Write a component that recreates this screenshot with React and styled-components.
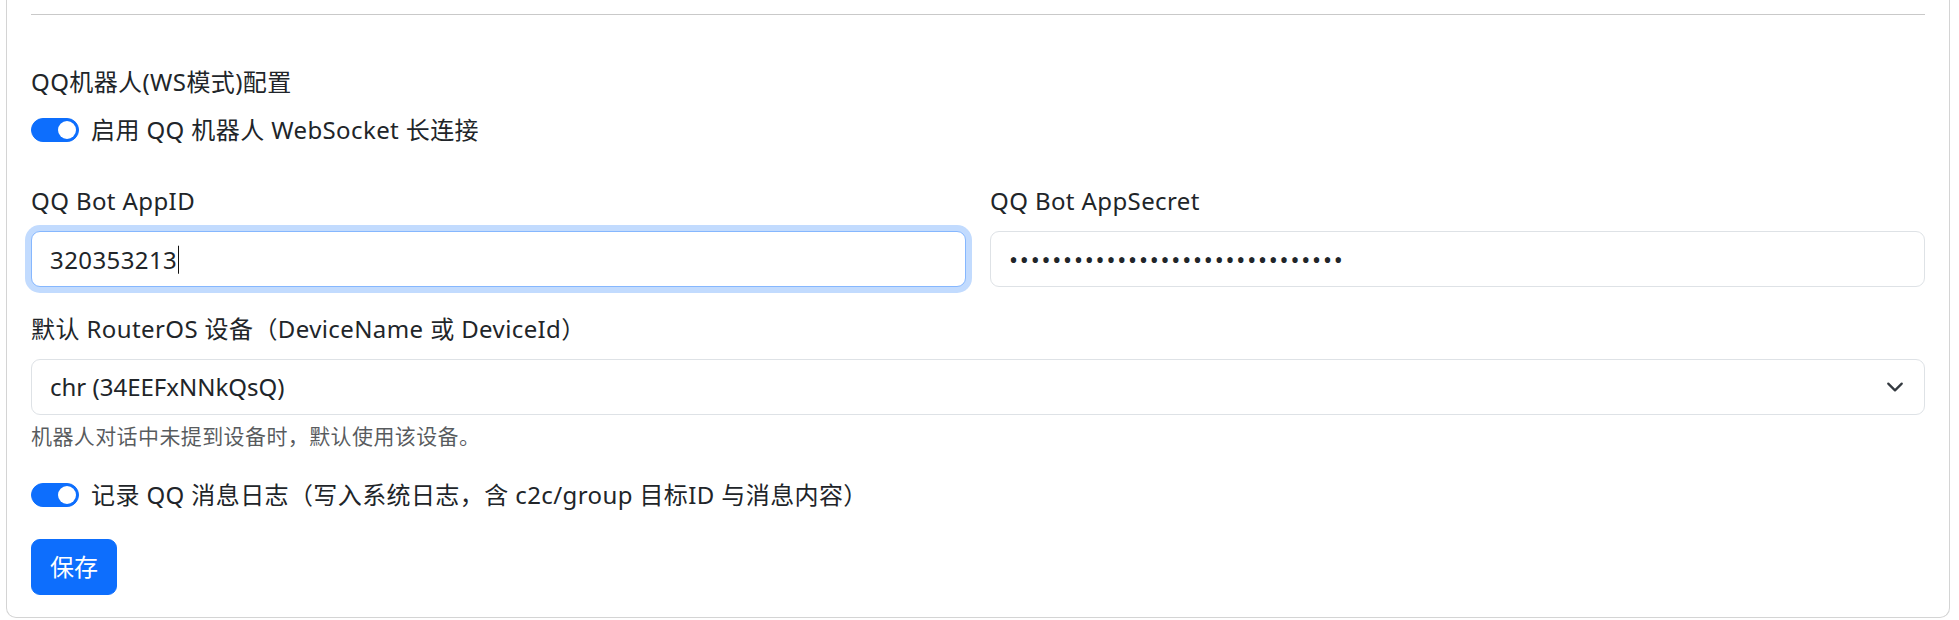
import React from 'react';
import styled, { createGlobalStyle } from 'styled-components';

const GlobalStyle = createGlobalStyle`
  html, body {
    margin: 0;
    padding: 0;
    background: #fff;
  }
  body {
    font-family: "Noto Sans", "Noto Sans CJK SC", sans-serif;
    font-size: 24px;
    line-height: 1.5;
    letter-spacing: 0.4px;
    color: #212529;
  }
  * { box-sizing: border-box; }
`;

const Page = styled.div`
  padding: 0 9px 1px 6px;
`;

const Card = styled.div`
  background: #fff;
  border: 1px solid #d4d4d4;
  border-top: none;
  border-radius: 0 0 10px 10px;
  padding: 14px 24px 22px;
`;

const Divider = styled.hr`
  margin: 0 0 49px;
  border: 0;
  border-top: 1px solid #c9c9c9;
`;

const SectionTitle = styled.div`
  margin-bottom: 12px;
`;

const Check = styled.label`
  display: flex;
  align-items: flex-start;
  gap: 12px;
  min-height: 36px;
  margin-bottom: ${({ $mb }) => $mb || 0}px;
  cursor: pointer;
`;

const SwitchTrack = styled.span`
  position: relative;
  flex: none;
  width: 48px;
  height: 24px;
  margin-top: 6px;
  border-radius: 24px;
  background: ${({ $on }) => ($on ? '#0d6efd' : '#fff')};
  border: 1px solid ${({ $on }) => ($on ? '#0d6efd' : '#c8cdd3')};

  &::after {
    content: '';
    position: absolute;
    top: 2px;
    left: ${({ $on }) => ($on ? '26px' : '2px')};
    width: 18px;
    height: 18px;
    border-radius: 50%;
    background: ${({ $on }) => ($on ? '#fff' : '#c8cdd3')};
  }
`;

const Row = styled.div`
  display: grid;
  grid-template-columns: 1fr 1fr;
  column-gap: 24px;
  margin-bottom: 24px;
`;

const Field = styled.div`
  margin-bottom: ${({ $mb }) => $mb || 0}px;
`;

const Label = styled.label`
  display: block;
  margin-bottom: 12px;
`;

const InputWrap = styled.div`
  position: relative;
`;

const TextInput = styled.input`
  display: block;
  width: 100%;
  height: 56px;
  padding: 9px 18px;
  font: inherit;
  letter-spacing: ${({ type }) => (type === 'password' ? '1.8px' : 'inherit')};
  color: #212529;
  background: #fff;
  border: 1px solid ${({ $focused }) => ($focused ? '#86b7fe' : '#dee2e6')};
  border-radius: 9px;
  outline: none;
  caret-color: transparent;
  box-shadow: ${({ $focused }) => ($focused ? '0 0 0 6px rgba(13, 110, 253, 0.25)' : 'none')};
`;

/* text caret drawn over the focused input, right after its value */
const Caret = styled.span`
  position: absolute;
  left: 19px;
  top: 50%;
  transform: translateY(-50%);
  color: transparent;
  pointer-events: none;
  line-height: 1;

  &::after {
    content: '';
    display: inline-block;
    width: 1px;
    height: 28px;
    margin-left: 1px;
    vertical-align: middle;
    background: #111;
  }
`;

const SelectWrap = styled.div`
  position: relative;
`;

const Select = styled.select`
  display: block;
  width: 100%;
  height: 56px;
  padding: 9px 54px 9px 18px;
  font: inherit;
  color: #212529;
  background: #fff;
  border: 1px solid #dee2e6;
  border-radius: 9px;
  appearance: none;
  outline: none;
`;

const Chevron = styled.svg`
  position: absolute;
  right: 18px;
  top: 50%;
  width: 24px;
  height: 18px;
  margin-top: -9px;
  pointer-events: none;
`;

const HelpText = styled.div`
  margin-top: 6px;
  font-size: 21px;
  color: rgba(33, 37, 41, 0.75);
`;

const PrimaryButton = styled.button`
  display: inline-block;
  height: 56px;
  padding: 9px 18px;
  font: inherit;
  color: #fff;
  background: #0d6efd;
  border: 1px solid #0d6efd;
  border-radius: 9px;
  cursor: pointer;
`;

const Switch = ({ on, children, mb }) => (
  <Check $mb={mb}>
    <SwitchTrack $on={on} />
    <span>{children}</span>
  </Check>
);

const appId = '320353213';

export default function App() {
  return (
    <Page>
      <GlobalStyle />
      <Card>
        <Divider />
        <SectionTitle>QQ机器人(WS模式)配置</SectionTitle>
        <Switch on mb={35}>启用 QQ 机器人 WebSocket 长连接</Switch>

        <Row>
          <div>
            <Label>QQ Bot AppID</Label>
            <InputWrap>
              <TextInput $focused defaultValue={appId} />
              <Caret aria-hidden="true">{appId}</Caret>
            </InputWrap>
          </div>
          <div>
            <Label>QQ Bot AppSecret</Label>
            <TextInput type="password" defaultValue="abcdefghijklmnopqrstuvwxyz01234" />
          </div>
        </Row>

        <Field $mb={24}>
          <Label>默认 RouterOS 设备（DeviceName 或 DeviceId）</Label>
          <SelectWrap>
            <Select defaultValue="chr">
              <option value="chr">chr (34EEFxNNkQsQ)</option>
            </Select>
            <Chevron viewBox="0 0 16 16" fill="none">
              <path d="m2 5 6 6 6-6" stroke="#343a40" strokeWidth="2" strokeLinecap="round" strokeLinejoin="round" />
            </Chevron>
          </SelectWrap>
          <HelpText>机器人对话中未提到设备时，默认使用该设备。</HelpText>
        </Field>

        <Switch on mb={26}>记录 QQ 消息日志（写入系统日志，含 c2c/group 目标ID 与消息内容）</Switch>

        <PrimaryButton type="button">保存</PrimaryButton>
      </Card>
    </Page>
  );
}
